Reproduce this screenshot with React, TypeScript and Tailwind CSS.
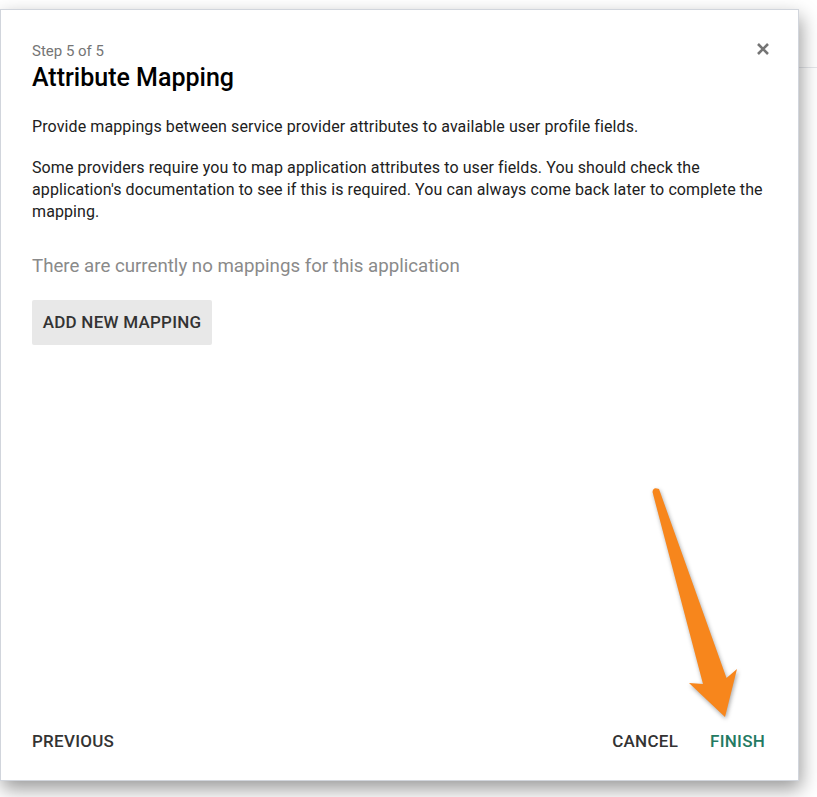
import React from "react";

const Arrow = () => (
  <svg
    className="absolute left-[640px] top-[480px] drop-shadow-[1px_2px_2px_rgba(0,0,0,0.35)]"
    width="110"
    height="250"
    viewBox="0 0 110 250"
  >
    <path
      d="M12.5 12 Q13 7.5 17 8.5 L19 9 L86.5 198 L97 189 L85 237 L49 203 L63 204 Z"
      fill="#f7861c"
    />
  </svg>
);

export default function App() {
  return (
    <div className="relative w-[817px] h-[797px] bg-white overflow-hidden font-['Roboto',sans-serif]">
      {/* page behind the modal */}
      <div className="h-[68px] border-b border-gray-200" />

      {/* modal */}
      <div className="absolute left-0 top-[9px] w-[799px] h-[772px] bg-white border border-gray-300 shadow-[2px_8px_18px_rgba(0,0,0,0.4)] flex flex-col px-[31px] pt-[31px]">
        <div className="flex items-start justify-between">
          <div className="text-[15px] leading-[20px] text-[#757575]">Step 5 of 5</div>
          <button className="w-6 h-6 flex items-center justify-center text-[#757575] -mr-[8px] mt-[-4px]">
            <svg width="14" height="14" viewBox="0 0 14 14">
              <path d="M2 2 L12 12 M12 2 L2 12" stroke="currentColor" strokeWidth="2.6" />
            </svg>
          </button>
        </div>
        <h1 className="mt-0 text-[25px] leading-[34px] font-medium text-black">Attribute Mapping</h1>

        <p className="mt-[21px] text-[16px] leading-[22px] tracking-[0.1px] text-[#212121]">
          Provide mappings between service provider attributes to available user profile fields.
        </p>
        <p className="mt-[19px] text-[16px] leading-[22px] tracking-[0.1px] text-[#212121]">
          Some providers require you to map application attributes to user fields. You should check the
          application's documentation to see if this is required. You can always come back later to complete the
          mapping.
        </p>

        <p className="mt-[31px] text-[18.7px] leading-[24px] text-[#8a8a8a]">
          There are currently no mappings for this application
        </p>

        <div className="mt-[22px]">
          <button className="w-[180px] h-[45px] rounded-[2px] bg-[#e8e8e8] text-[17px] tracking-[0.25px] font-medium text-[#333] uppercase">
            Add new mapping
          </button>
        </div>

        <div className="flex-1" />

        <div className="h-[40px] mb-[18px] flex items-center justify-between">
          <button className="text-[17px] tracking-[0.25px] font-medium text-[#333] uppercase">Previous</button>
          <div className="flex items-center gap-[32px] mr-[2px]">
            <button className="text-[17px] tracking-[0.25px] font-medium text-[#333] uppercase">Cancel</button>
            <button className="text-[17px] tracking-[0.25px] font-medium text-[#237a62] uppercase">Finish</button>
          </div>
        </div>
      </div>

      <Arrow />
    </div>
  );
}
